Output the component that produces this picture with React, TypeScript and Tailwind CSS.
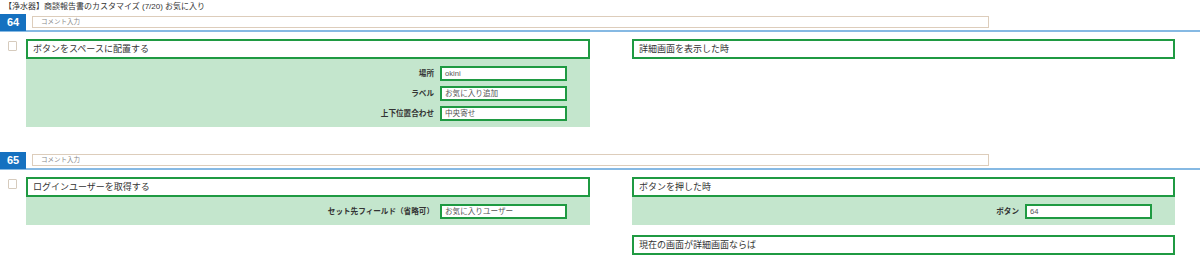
const FONT = { fontFamily: '"Liberation Sans", "Noto Sans CJK JP", sans-serif' };

type Field = { label: string; value: string };

function TitleBox({ text }: { text: string }) {
    return (
        <div className="h-[20px] border-2 border-[#1f9a42] bg-white pl-[5px] text-[9px] leading-[16px] text-[#333]">
            {text}
        </div>
    );
}

function FieldBody({ fields }: { fields: Field[] }) {
    return (
        <div className="flex flex-col gap-[5px] bg-[#c4e6cd] pt-[7px] pb-[6px] pr-[23px]">
            {fields.map((f) => (
                <div key={f.label} className="flex items-center justify-end">
                    <span className="mr-[6px] text-[7.6px] font-bold text-[#333]">{f.label}</span>
                    <div className="h-[15px] w-[127px] border-2 border-[#1f9a42] bg-white pl-[3px] text-[7.6px] leading-[11px] text-[#555]">
                        {f.value}
                    </div>
                </div>
            ))}
        </div>
    );
}

function SectionHeader({ num }: { num: number }) {
    return (
        <div className="flex h-[18px] items-start border-b-2 border-[#86b9e3]">
            <div className="flex h-[17px] w-[26px] items-center justify-center bg-[#1571c0] text-[11px] font-bold text-white">
                {num}
            </div>
            <div className="ml-[6px] mt-[2px] h-[12px] w-[957px] border border-[#ddcdbb] bg-white pl-[8px] text-[6.5px] leading-[10px] text-[#888]">
                コメント入力
            </div>
        </div>
    );
}

function Checkbox() {
    return (
        <div className="w-[26px] shrink-0">
            <div className="ml-[8px] mt-[2px] h-[10px] w-[9px] rounded-[1px] border border-[#d6cbbd] bg-white" />
        </div>
    );
}

export default function App() {
    return (
        <div className="h-[266px] w-[1200px] overflow-hidden bg-white" style={FONT}>
            <div className="h-[14px] pl-[4px] text-[8px] leading-[13px] text-[#333]">
                【浄水器】商談報告書のカスタマイズ (7/20) お気に入り
            </div>

            <SectionHeader num={64} />
            <div className="mt-[7px] flex">
                <Checkbox />
                <div className="w-[564px]">
                    <TitleBox text="ボタンをスペースに配置する" />
                    <FieldBody
                        fields={[
                            { label: "場所", value: "okini" },
                            { label: "ラベル", value: "お気に入り追加" },
                            { label: "上下位置合わせ", value: "中央寄せ" },
                        ]}
                    />
                </div>
                <div className="ml-[42px] w-[543px]">
                    <TitleBox text="詳細画面を表示した時" />
                </div>
            </div>

            <div className="mt-[25px]">
                <SectionHeader num={65} />
            </div>
            <div className="mt-[7px] flex">
                <Checkbox />
                <div className="w-[564px]">
                    <TitleBox text="ログインユーザーを取得する" />
                    <FieldBody fields={[{ label: "セット先フィールド（省略可）", value: "お気に入りユーザー" }]} />
                </div>
                <div className="ml-[42px] w-[543px]">
                    <TitleBox text="ボタンを押した時" />
                    <FieldBody fields={[{ label: "ボタン", value: "64" }]} />
                    <div className="mt-[10px]">
                        <TitleBox text="現在の画面が詳細画面ならば" />
                    </div>
                </div>
            </div>
        </div>
    );
}
